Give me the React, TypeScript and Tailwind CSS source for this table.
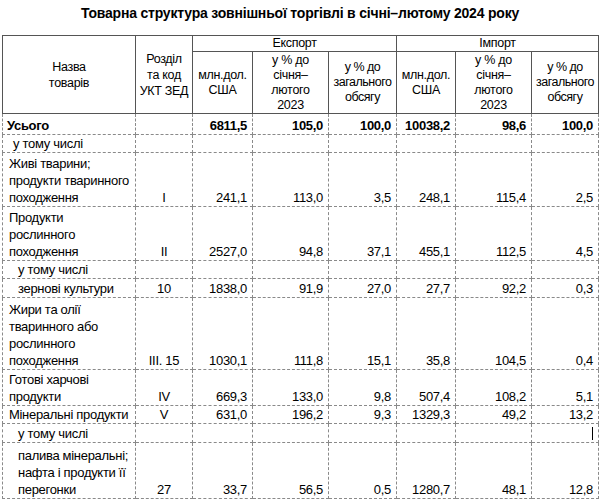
import React from 'react'

type Row = {
  name: string[]
  indent?: number
  bold?: boolean
  code?: string
  vals?: string[]
  h: number
  cursor?: boolean
}

const rows: Row[] = [
  { name: ['Усього'], bold: true, vals: ['6811,5', '105,0', '100,0', '10038,2', '98,6', '100,0'], h: 21, indent: 4 },
  { name: ['у тому числі'], indent: 10, h: 18 },
  { name: ['Живі тварини;', 'продукти тваринного', 'походження'], code: 'I', vals: ['241,1', '113,0', '3,5', '248,1', '115,4', '2,5'], h: 54, indent: 6 },
  { name: ['Продукти', 'рослинного', 'походження'], code: 'II', vals: ['2527,0', '94,8', '37,1', '455,1', '112,5', '4,5'], h: 54, indent: 6 },
  { name: ['у тому числі'], indent: 15, h: 18 },
  { name: ['зернові культури'], indent: 15, code: '10', vals: ['1838,0', '91,9', '27,0', '27,7', '92,2', '0,3'], h: 19 },
  { name: ['Жири та олії', 'тваринного або', 'рослинного', 'походження'], code: 'III. 15', vals: ['1030,1', '111,8', '15,1', '35,8', '104,5', '0,4'], h: 72, indent: 6 },
  { name: ['Готові харчові', 'продукти'], code: 'IV', vals: ['669,3', '133,0', '9,8', '507,4', '108,2', '5,1'], h: 36, indent: 6 },
  { name: ['Мінеральні продукти'], code: 'V', vals: ['631,0', '196,2', '9,3', '1329,3', '49,2', '13,2'], h: 18, indent: 6 },
  { name: ['у тому числі'], indent: 15, h: 19, cursor: true },
  { name: ['палива мінеральні;', 'нафта і продукти її', 'перегонки'], indent: 15, code: '27', vals: ['33,7', '56,5', '0,5', '1280,7', '48,1', '12,8'], h: 56 },
]

const dash = 'border border-dashed border-[#8a8a8a] p-0'
const solid = 'border border-solid border-[#555] p-0 font-normal text-center align-middle'

export default function App() {
  return (
    <div className="w-[600px] h-[499px] overflow-hidden bg-white text-black font-['Liberation_Sans',Arial,sans-serif]">
      <div className="h-[35px] pt-[3px] text-center font-bold text-[14px] tracking-[-0.2px]">
        Товарна структура зовнішньої торгівлі в січні–лютому 2024 року
      </div>
      <table className="ml-[2px] w-[596px] table-fixed border-collapse text-[13px] leading-[17px] tracking-[-0.3px]">
        <colgroup>
          <col className="w-[133px]" />
          <col className="w-[57px]" />
          <col className="w-[60px]" />
          <col className="w-[76px]" />
          <col className="w-[68px]" />
          <col className="w-[59px]" />
          <col className="w-[76px]" />
          <col className="w-[67px]" />
        </colgroup>
        <thead className="leading-[15px] text-[12.5px]">
          <tr className="h-[16px]">
            <th rowSpan={2} className={`${solid} leading-[16px]`}>
              Назва<br />товарів
            </th>
            <th rowSpan={2} className={`${solid} leading-[16px]`}>
              Розділ<br />та код<br />УКТ ЗЕД
            </th>
            <th colSpan={3} className={solid}>Експорт</th>
            <th colSpan={3} className={solid}>Імпорт</th>
          </tr>
          <tr className="h-[62px]">
            {[0, 1].map((k) => (
              <React.Fragment key={k}>
                <th className={solid}>млн.дол.<br />США</th>
                <th className={solid}>у % до<br />січня–<br />лютого<br />2023</th>
                <th className={`${solid} tracking-[-0.5px]`}>у % до<br />загального<br />обсягу</th>
              </React.Fragment>
            ))}
          </tr>
        </thead>
        <tbody>
          {rows.map((r, i) => (
            <tr key={i} style={{ height: r.h }} className={r.bold ? 'font-bold' : ''}>
              <td className={`${dash} align-bottom whitespace-nowrap`} style={{ paddingLeft: r.indent ?? 6 }}>
                {r.name.map((n, j) => (
                  <div key={j}>{n}</div>
                ))}
              </td>
              <td className={`${dash} align-bottom text-center`}>{r.code ?? ''}</td>
              {Array.from({ length: 6 }).map((_, j) => (
                <td key={j} className={`${dash} align-bottom text-right pr-[5px] relative`}>
                  {r.vals ? r.vals[j] : ''}
                  {r.cursor && j === 5 && (
                    <span className="absolute right-[5px] top-[3px] h-[13px] w-[1px] bg-black" />
                  )}
                </td>
              ))}
            </tr>
          ))}
        </tbody>
      </table>
    </div>
  )
}
